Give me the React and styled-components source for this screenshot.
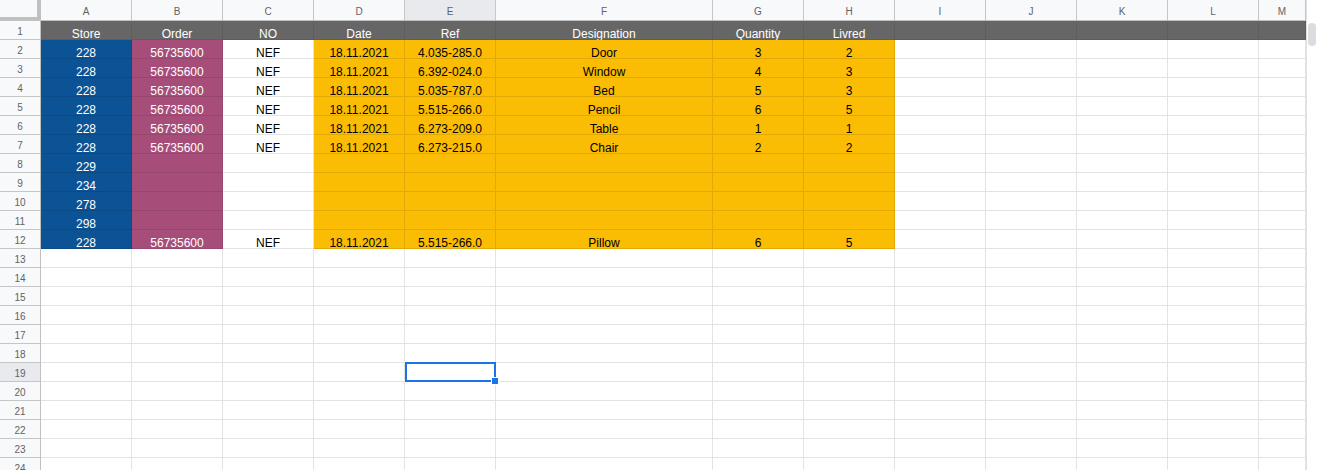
import React from "react";
import styled, { createGlobalStyle } from "styled-components";

const GlobalStyle = createGlobalStyle`
  body {
    margin: 0;
    background: #fff;
    overflow: hidden;
  }
`;

const COLUMNS = ["A", "B", "C", "D", "E", "F", "G", "H", "I", "J", "K", "L", "M"];
const TOTAL_ROWS = 24;
const SELECTED = { col: 4, row: 19 };

const HEADINGS = ["Store", "Order", "NO", "Date", "Ref", "Designation", "Quantity", "Livred"];

const ITEMS = [
  ["228", "56735600", "NEF", "18.11.2021", "4.035-285.0", "Door", "3", "2"],
  ["228", "56735600", "NEF", "18.11.2021", "6.392-024.0", "Window", "4", "3"],
  ["228", "56735600", "NEF", "18.11.2021", "5.035-787.0", "Bed", "5", "3"],
  ["228", "56735600", "NEF", "18.11.2021", "5.515-266.0", "Pencil", "6", "5"],
  ["228", "56735600", "NEF", "18.11.2021", "6.273-209.0", "Table", "1", "1"],
  ["228", "56735600", "NEF", "18.11.2021", "6.273-215.0", "Chair", "2", "2"],
  ["229", "", "", "", "", "", "", ""],
  ["234", "", "", "", "", "", "", ""],
  ["278", "", "", "", "", "", "", ""],
  ["298", "", "", "", "", "", "", ""],
  ["228", "56735600", "NEF", "18.11.2021", "5.515-266.0", "Pillow", "6", "5"],
];

const FILLS = {
  title: { fill: "#666666", line: "#5d5d5d", color: "#ffffff" },
  store: { fill: "#0b5394", line: "#0a4b87", color: "#ffffff" },
  order: { fill: "#a64d79", line: "#97466e", color: "#ffffff" },
  amber: { fill: "#fbbc04", line: "#e2a905", color: "#000000" },
  plain: { fill: "#ffffff", line: "#e2e3e3", color: "#000000" },
};

function paintFor(row, col) {
  if (row === 1) return FILLS.title;
  if (row >= 2 && row <= 12) {
    if (col === 0) return FILLS.store;
    if (col === 1) return FILLS.order;
    if (col >= 3 && col <= 7) return FILLS.amber;
  }
  return FILLS.plain;
}

function valueFor(row, col) {
  if (row === 1) return HEADINGS[col] || "";
  const item = ITEMS[row - 2];
  return item ? item[col] || "" : "";
}

const Screen = styled.div`
  display: flex;
  width: 1320px;
  height: 470px;
  overflow: hidden;
  font-family: "Liberation Sans", Arial, sans-serif;
`;

const Grid = styled.div`
  flex: 1;
  display: grid;
  grid-template-columns: 41px repeat(5, 91px) 217px repeat(6, 91px) 1fr;
  grid-template-rows: 21px;
  grid-auto-rows: 19px;
  align-content: start;
`;

const Corner = styled.div`
  box-sizing: border-box;
  background: #f8f9fa;
  border-right: 4px solid #c0c0c0;
  border-bottom: 4px solid #c0c0c0;
`;

const ColHead = styled.div`
  box-sizing: border-box;
  display: flex;
  align-items: center;
  justify-content: center;
  padding-top: 2px;
  background: ${(p) => (p.$active ? "#e8eaed" : "#f8f9fa")};
  border-right: 1px solid #c4c7c5;
  border-bottom: 1px solid #c0c0c0;
  color: #5f6368;
  font-size: 10px;
`;

const RowHead = styled.div`
  box-sizing: border-box;
  display: flex;
  align-items: center;
  justify-content: center;
  padding-top: 3px;
  background: ${(p) => (p.$active ? "#e8eaed" : "#f8f9fa")};
  border-right: 1px solid #c0c0c0;
  border-bottom: 1px solid #c4c7c5;
  color: #5f6368;
  font-size: 10px;
`;

const Cell = styled.div`
  position: relative;
  box-sizing: border-box;
  display: flex;
  align-items: flex-end;
  justify-content: center;
  background: ${(p) => p.$fill};
  color: ${(p) => p.$color};
  border-right: 1px solid ${(p) => p.$line};
  border-bottom: 1px solid ${(p) => p.$line};
  font-size: 12px;
  line-height: 10px;
  white-space: nowrap;
`;

const Selection = styled.div`
  position: absolute;
  z-index: 2;
  top: -1px;
  left: 0;
  right: -1px;
  bottom: -1px;
  border: 2px solid #1a73e8;
  pointer-events: none;
`;

const FillHandle = styled.span`
  position: absolute;
  right: -5px;
  bottom: -5px;
  width: 6px;
  height: 6px;
  background: #1a73e8;
  border: 1px solid #fff;
`;

const Scrollbar = styled.div`
  box-sizing: border-box;
  width: 14px;
  padding: 23px 5px 0 1px;
  border-left: 1px solid #e0e0e0;
  background: #fff;
`;

const Thumb = styled.div`
  width: 8px;
  height: 23px;
  border-radius: 4px;
  background: #dadce0;
`;

export default function App() {
  const rows = [];
  for (let r = 1; r <= TOTAL_ROWS; r++) {
    rows.push(
      <RowHead key={`h${r}`} $active={r === SELECTED.row}>
        {r}
      </RowHead>
    );
    COLUMNS.forEach((_, c) => {
      const paint = paintFor(r, c);
      const picked = r === SELECTED.row && c === SELECTED.col;
      rows.push(
        <Cell key={`${r}-${c}`} $fill={paint.fill} $line={paint.line} $color={paint.color}>
          {valueFor(r, c)}
          {picked && (
            <Selection>
              <FillHandle />
            </Selection>
          )}
        </Cell>
      );
    });
  }

  return (
    <>
      <GlobalStyle />
      <Screen>
        <Grid>
          <Corner />
          {COLUMNS.map((name, c) => (
            <ColHead key={name} $active={c === SELECTED.col}>
              {name}
            </ColHead>
          ))}
          {rows}
        </Grid>
        <Scrollbar>
          <Thumb />
        </Scrollbar>
      </Screen>
    </>
  );
}
